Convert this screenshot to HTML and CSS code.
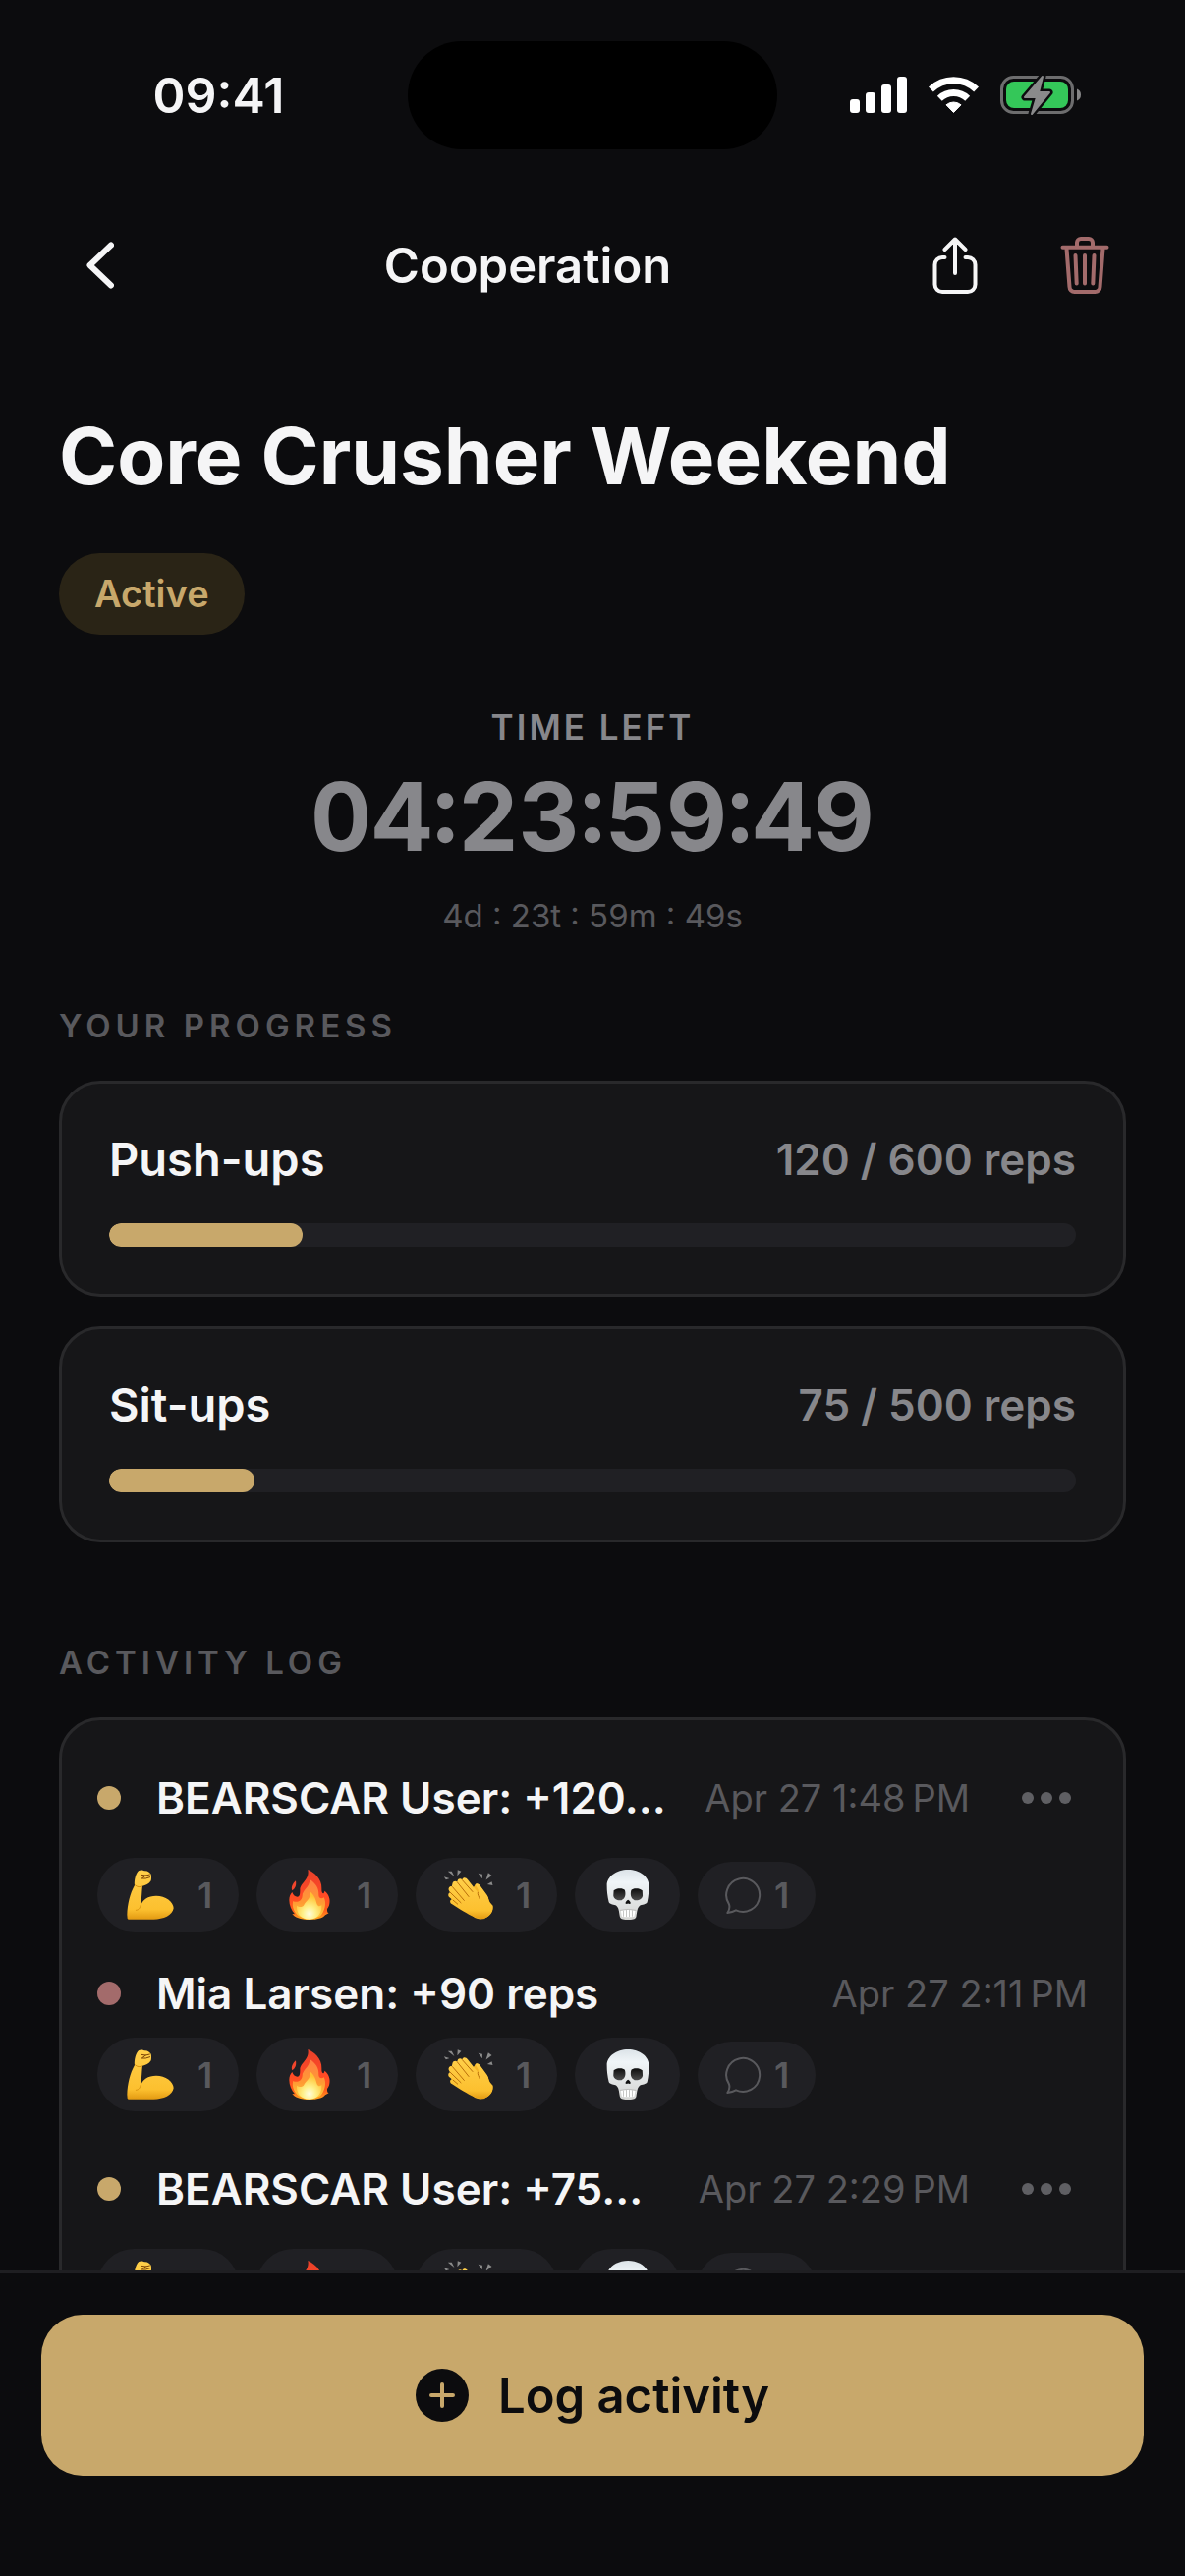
FILE: index.html
```html
<!DOCTYPE html>
<html lang="en">
<head>
<meta charset="utf-8">
<meta name="viewport" content="width=device-width, initial-scale=1">
<title>Cooperation</title>
<link rel="stylesheet" href="styles.css">
</head>
<body>
<svg class="sprite" aria-hidden="true">
  <defs>
    <linearGradient id="skin" x1="0" y1="0" x2="0" y2="1">
      <stop offset="0" stop-color="#ffcf4a"/><stop offset=".8" stop-color="#fcc02f"/><stop offset="1" stop-color="#e39a12"/>
    </linearGradient>
    <linearGradient id="flame" x1="0" y1="0" x2="0" y2="1">
      <stop offset="0" stop-color="#e8402a"/><stop offset=".5" stop-color="#ff4a26"/><stop offset=".8" stop-color="#ff5a1c"/><stop offset="1" stop-color="#ffa51e"/>
    </linearGradient>
    <linearGradient id="flame-mid" x1="0" y1="0" x2="0" y2="1">
      <stop offset="0" stop-color="#ff7f45"/><stop offset=".6" stop-color="#ff9a33"/><stop offset="1" stop-color="#ffd23a"/>
    </linearGradient>
    <radialGradient id="flame-core" cx=".5" cy=".8" r=".65">
      <stop offset="0" stop-color="#fffde0"/><stop offset=".4" stop-color="#fff08a"/><stop offset="1" stop-color="#ffc233"/>
    </radialGradient>
    <linearGradient id="bone" x1="0" y1="0" x2="0" y2="1">
      <stop offset="0" stop-color="#dce3e8"/><stop offset=".25" stop-color="#f0f5f8"/><stop offset="1" stop-color="#d4d4d2"/>
    </linearGradient>
    <linearGradient id="socket" x1="0" y1="0" x2="0" y2="1">
      <stop offset="0" stop-color="#0c0c0c"/><stop offset="1" stop-color="#4c4c4c"/>
    </linearGradient>
  </defs>
  <symbol id="arm" viewBox="150 98 144 153">
    <path fill="url(#skin)" d="M152 247L151 236C152 205 160 170 174 146C172 130 178 108 187 101C192 98 200 99 204 102C212 100 222 108 224 112C226 120 225 127 224 132C218 142 207 147 198 148C196 160 196 185 192 209C198 190 215 178 240 178C268 178 293 196 293 216C290 238 262 250 232 250L162 250C156 250 153 250 152 247Z"/>
    <path fill="none" stroke="#d8920f" stroke-width="3" stroke-linecap="round" d="M192 208C190 218 184 222 178 222M176 146C182 152 190 152 197 149"/>
    <path fill="none" stroke="#7a4306" stroke-width="3" stroke-linecap="round" d="M194 114L208 116L220 113M208 116L196 125H208L221 121"/>
  </symbol>
  <symbol id="fire" viewBox="640 98 130 153">
    <path fill="#f0452c" d="M663 132C665 144 663 155 652 162C648 154 652 142 663 132Z"/>
    <path fill="url(#flame)" d="M700 98C716 105 744 124 742 156C741 172 749 176 751 163C764 172 769 188 766 202C765 209 762 214 759 218Q758 230 764 231L753 237C744 247 730 251 705 251C676 251 660 244 652 233L660 234C650 222 643 208 643 191C643 181 647 172 652 167C655 176 661 181 668 181C676 180 676 170 676 160C676 138 706 130 700 98Z"/>
    <path fill="url(#flame-mid)" d="M706 128C724 140 734 154 733 176C733 184 740 190 749 183C758 200 752 225 738 240C720 250 688 250 672 240C658 228 650 210 655 194C664 200 682 196 683 178C683 160 706 152 706 128Z"/>
    <path fill="url(#flame-core)" d="M708 166C728 184 724 202 731 208C736 212 740 208 742 206C744 226 733 249 706 250C680 250 664 232 666 208C672 214 684 214 688 206C692 194 708 190 708 166Z"/>
  </symbol>
  <symbol id="clap" viewBox="152 98 152 154">
    <path fill="#8b8b8b" d="M152 120L169 125L158 129ZM164 103L176 103L184 119ZM194 99L205 103L193 117ZM257 109L270 112L270 126ZM288 108L299 116L281 130ZM299 135L302 146L285 143Z"/>
    <path fill="#f5b526" d="M246 148C250 138 260 142 264 150L288 184C292 204 301 204 302 212C304 232 290 244 270 250C250 252 236 240 234 230L212 190Z"/>
    <path fill="url(#skin)" d="M178 141C180 133 188 132 193 136C193 126 202 123 208 129C211 120 220 122 225 129L256 168C262 162 252 152 248 144C252 138 260 142 265 150L284 176C292 188 286 198 302 208C304 226 294 240 274 250C250 250 224 234 204 222L176 204C168 198 171 190 176 189L170 184C162 178 166 168 171 168L168 164C163 156 170 148 176 150Z"/>
    <path fill="none" stroke="#b96f0a" stroke-width="3" stroke-linecap="round" d="M208 130L240 166M193 137L228 181M178 151L214 193M171 168L204 200M256 168C254 176 260 180 262 188M180 192L194 204"/>
  </symbol>
  <symbol id="skull" viewBox="650 98 131 154">
    <path fill="url(#bone)" d="M716 98C752 98 780 120 780 146C780 166 779 178 775 198C772 206 758 206 752 209C744 216 744 226 741 243C738 252 728 252 716 252C704 252 694 252 691 243C688 226 688 216 680 209C674 206 660 206 657 198C653 178 651 166 651 146C651 120 680 98 716 98Z"/>
    <path fill="url(#socket)" d="M672 162C680 154 702 154 706 161C710 174 708 188 696 192C684 195 672 188 671 178ZM760 162C752 154 730 154 726 161C722 174 724 188 736 192C748 195 760 188 761 178Z"/>
    <path fill="#111" d="M716 191C721 194 724 199 724 202Q720 205 716 202Q712 205 708 202C708 199 711 194 716 191Z"/>
    <path fill="#fff" d="M694 224Q716 218 738 224L735 242Q716 246 697 242Z"/>
    <path fill="none" stroke="#a9a9a7" stroke-width="2" d="M691 223Q716 217 741 223M702 224V242M711 222V243M720 222V243M729 223V242"/>
  </symbol>
  <symbol id="bubble" viewBox="1010 120 114 114">
    <path fill="none" stroke="currentColor" stroke-width="6" stroke-linejoin="round" d="M1046 223A51 51 0 1 0 1025 205Q1029 218 1020 231Q1036 229 1046 223Z"/>
  </symbol>
  <symbol id="more" viewBox="0 0 50 12">
    <g fill="currentColor"><circle cx="6" cy="6" r="6"/><circle cx="25" cy="6" r="6"/><circle cx="44" cy="6" r="6"/></g>
  </symbol>
</svg>

<div class="app">
  <div class="status">
    <time class="status-time">09:41</time>
    <div class="island"></div>
    <div class="status-icons">
      <svg width="58" height="38" viewBox="0 0 58 38" fill="#fff" role="img" aria-label="Signal">
        <rect x="0" y="23" width="10" height="14" rx="3"/><rect x="16" y="16" width="10" height="21" rx="3"/><rect x="32" y="8" width="10" height="29" rx="3"/><rect x="48" y="0" width="10" height="37" rx="3"/>
      </svg>
      <svg width="51" height="38" viewBox="0 0 51 38" role="img" aria-label="Wi-Fi">
        <g fill="none" stroke="#fff" stroke-width="7"><path d="M2.4 13A33.5 33.5 0 0 1 48.6 13"/><path d="M11.3 22.3A20.5 20.5 0 0 1 39.7 22.3"/></g>
        <path fill="#fff" stroke="#fff" stroke-linejoin="round" d="M25.5 36.5L18 28.8A11.5 11.5 0 0 1 33 28.8Z"/>
      </svg>
      <svg width="82" height="42" viewBox="0 0 82 42" role="img" aria-label="Charging">
        <rect x="1.5" y="2.5" width="72" height="36" rx="12" fill="none" stroke="#6d6d6e" stroke-width="3"/>
        <rect x="6" y="7" width="63" height="27" rx="8" fill="#34c759"/>
        <path fill="#858586" d="M78 14.5Q82 16 82 20.500Q82 25 78 26.500Z"/>
        <path fill="#0c0c0e" stroke="#0c0c0e" stroke-width="7" stroke-linejoin="round" d="M43 2L25 23H37L32 40L50 18H39Z"/>
        <path fill="#8a8a8b" stroke="#8a8a8b" stroke-width="2" stroke-linejoin="round" d="M43 2L25 23H37L32 40L50 18H39Z"/>
      </svg>
    </div>
  </div>

  <header class="nav">
    <button class="icon-button" type="button" aria-label="Back">
      <svg width="28" height="48" viewBox="0 0 28 48" fill="none" stroke="#f5f5f6" stroke-width="6" stroke-linecap="round" stroke-linejoin="round"><path d="M25 3.500L3.500 24L25 44.500"/></svg>
    </button>
    <span class="nav-title">Cooperation</span>
    <div class="nav-actions">
      <button class="icon-button" type="button" aria-label="Share">
        <svg width="48" height="60" viewBox="0 0 48 60" fill="none" stroke="#f5f5f6" stroke-width="4" stroke-linecap="round" stroke-linejoin="round"><path d="M13.500 22H11A7.500 7.500 0 0 0 3.500 29.500V49.500A7.500 7.500 0 0 0 11 57H37A7.500 7.500 0 0 0 44.500 49.500V29.500A7.500 7.500 0 0 0 37 22H34.500M24 38V3.500M13.500 14L24 3.500L34.500 14"/></svg>
      </button>
      <button class="icon-button" type="button" aria-label="Delete">
        <svg width="50" height="60" viewBox="0 0 50 60" fill="none" stroke="#a36b6b" stroke-width="4" stroke-linecap="round" stroke-linejoin="round"><path d="M2.500 11.700H47.500M17 11V7A4 4 0 0 1 21 3H29A4 4 0 0 1 33 7V11M6.500 13L9.500 52A5 5 0 0 0 14.500 57H35.500A5 5 0 0 0 40.500 52L43.500 13M15.500 20L16.700 48.500M25 20V48.500M34.500 20L33.300 48.500"/></svg>
      </button>
    </div>
  </header>

  <main class="content">
    <h1>Core Crusher Weekend</h1>
    <span class="badge">Active</span>

    <section class="timer">
      <div class="timer-label">TIME LEFT</div>
      <div class="timer-value">04:23:59:49</div>
      <div class="timer-detail">4d : 23t : 59m : 49s</div>
    </section>

    <section class="section">
      <h2>YOUR PROGRESS</h2>
      <div class="goals">
        <div class="card goal">
          <div class="goal-head"><label for="push">Push-ups</label><span class="goal-value">120 / 600 reps</span></div>
          <progress id="push" value="120" max="600"></progress>
        </div>
        <div class="card goal">
          <div class="goal-head"><label for="sit">Sit-ups</label><span class="goal-value">75 / 500 reps</span></div>
          <progress id="sit" value="75" max="500"></progress>
        </div>
      </div>
    </section>

    <section class="section activity">
      <h2>ACTIVITY LOG</h2>
      <ul class="card log">
        <li class="entry">
          <div class="entry-head entry-own">
            <span class="dot"></span><span class="entry-text">BEARSCAR User: +120...</span>
            <time class="entry-time">Apr 27 1:48&#8239;PM</time>
            <button class="more" type="button" aria-label="More"><svg width="50" height="12"><use href="#more"/></svg></button>
          </div>
          <div class="reactions">
            <button class="pill" type="button" aria-label="Strong"><svg class="emoji"><use href="#arm"/></svg><span class="count">1</span></button>
            <button class="pill" type="button" aria-label="Fire"><svg class="emoji"><use href="#fire"/></svg><span class="count">1</span></button>
            <button class="pill" type="button" aria-label="Clap"><svg class="emoji"><use href="#clap"/></svg><span class="count">1</span></button>
            <button class="pill" type="button" aria-label="Skull"><svg class="emoji"><use href="#skull"/></svg></button>
            <button class="pill comment" type="button" aria-label="Comments"><svg class="bubble"><use href="#bubble"/></svg><span class="count">1</span></button>
          </div>
        </li>
        <li class="entry">
          <div class="entry-head">
            <span class="dot dot-other"></span><span class="entry-text">Mia Larsen: +90 reps</span>
            <time class="entry-time">Apr 27 2:11&#8239;PM</time>
          </div>
          <div class="reactions">
            <button class="pill" type="button" aria-label="Strong"><svg class="emoji"><use href="#arm"/></svg><span class="count">1</span></button>
            <button class="pill" type="button" aria-label="Fire"><svg class="emoji"><use href="#fire"/></svg><span class="count">1</span></button>
            <button class="pill" type="button" aria-label="Clap"><svg class="emoji"><use href="#clap"/></svg><span class="count">1</span></button>
            <button class="pill" type="button" aria-label="Skull"><svg class="emoji"><use href="#skull"/></svg></button>
            <button class="pill comment" type="button" aria-label="Comments"><svg class="bubble"><use href="#bubble"/></svg><span class="count">1</span></button>
          </div>
        </li>
        <li class="entry">
          <div class="entry-head entry-own">
            <span class="dot"></span><span class="entry-text">BEARSCAR User: +75...</span>
            <time class="entry-time">Apr 27 2:29&#8239;PM</time>
            <button class="more" type="button" aria-label="More"><svg width="50" height="12"><use href="#more"/></svg></button>
          </div>
          <div class="reactions">
            <button class="pill" type="button" aria-label="Strong"><svg class="emoji"><use href="#arm"/></svg><span class="count">1</span></button>
            <button class="pill" type="button" aria-label="Fire"><svg class="emoji"><use href="#fire"/></svg><span class="count">1</span></button>
            <button class="pill" type="button" aria-label="Clap"><svg class="emoji"><use href="#clap"/></svg><span class="count">1</span></button>
            <button class="pill" type="button" aria-label="Skull"><svg class="emoji"><use href="#skull"/></svg></button>
            <button class="pill comment" type="button" aria-label="Comments"><svg class="bubble"><use href="#bubble"/></svg><span class="count">1</span></button>
          </div>
        </li>
      </ul>
    </section>
  </main>

  <footer class="bottom">
    <button class="primary" type="button">
      <svg width="54" height="54" viewBox="0 0 54 54"><circle cx="27" cy="27" r="27" fill="#0c0c0e"/><path d="M27 16V38M16 27H38" stroke="#c8a86b" stroke-width="4" stroke-linecap="round"/></svg>
      Log activity
    </button>
  </footer>
</div>
</body>
</html>
```
FILE: styles.css
```css
* {
  box-sizing: border-box;
}

:root {
  --bg: #0c0c0e;
  --card: #161618;
  --line: #29292b;
  --fill: #202024;
  --text: #f5f5f6;
  --text-2: #87878b;
  --text-3: #59595d;
  --gold: #c8a86b;
}

body {
  margin: 0;
  background: var(--bg);
  color: var(--text);
  font-family: Inter, "Liberation Sans", sans-serif;
}

button {
  margin: 0;
  padding: 0;
  border: 0;
  background: none;
  color: inherit;
  font: inherit;
}

svg {
  display: block;
}

.sprite {
  position: absolute;
  width: 0;
  height: 0;
}

.app {
  display: flex;
  flex-direction: column;
  height: 100vh;
}

/* Status bar */
.status {
  display: grid;
  grid-template-columns: 1fr 376px 1fr;
  align-items: center;
  padding: 42px 0 34px;
}

.status-time {
  padding-left: 30px;
  font-size: 50px;
  font-weight: 600;
  text-align: center;
}

.island {
  height: 110px;
  border-radius: 55px;
  background: #000;
}

.status-icons {
  display: flex;
  justify-content: center;
  align-items: center;
  gap: 22px;
  padding-right: 32px;
}

/* Navigation */
.nav {
  display: flex;
  align-items: center;
  height: 168px;
  flex: none;
  padding: 0 60px;
}

.icon-button {
  display: flex;
  justify-content: center;
  align-items: center;
  width: 84px;
  height: 84px;
}

.nav-title {
  flex: 1;
  font-size: 49px;
  font-weight: 600;
  text-align: center;
}

.nav-actions {
  display: flex;
  gap: 48px;
}

/* Scrolling content */
.content {
  flex: 1;
  min-height: 0;
  padding: 60px 60px 0;
  overflow-y: auto;
  scrollbar-width: none;
}

h1 {
  margin: 0 0 49px;
  font-size: 80px;
  font-weight: 700;
  line-height: 100px;
}

.badge {
  display: block;
  width: fit-content;
  padding: 0 36px;
  border-radius: 42px;
  background: #2a2416;
  color: var(--gold);
  font-size: 38px;
  font-weight: 600;
  line-height: 83px;
}

.timer {
  margin-top: 72px;
  text-align: center;
}

.timer-label {
  color: var(--text-2);
  font-size: 35px;
  font-weight: 600;
  line-height: 44px;
  letter-spacing: 3px;
}

.timer-value {
  margin: 11px 0 23px;
  color: var(--text-2);
  font-size: 96px;
  font-weight: 700;
  line-height: 116px;
  font-variant-numeric: tabular-nums;
}

.timer-detail {
  color: var(--text-3);
  font-size: 33px;
  line-height: 40px;
}

.section {
  margin-top: 72px;
}

.activity {
  margin-top: 102px;
}

h2 {
  margin: 0 0 36px;
  color: var(--text-3);
  font-size: 33px;
  font-weight: 600;
  line-height: 40px;
  letter-spacing: 5px;
}

.card {
  border: 3px solid var(--line);
  border-radius: 42px;
  background: var(--card);
}

.goals {
  display: grid;
  gap: 30px;
}

.goal {
  display: grid;
  gap: 36px;
  padding: 48px;
}

.goal-head {
  display: flex;
  justify-content: space-between;
  align-items: center;
  font-size: 47px;
  font-weight: 600;
  line-height: 58px;
}

.goal-value {
  color: var(--text-2);
  font-size: 44px;
}

progress {
  display: block;
  appearance: none;
  width: 100%;
  height: 24px;
  border: 0;
  border-radius: 12px;
  background: var(--fill);
  overflow: hidden;
}

progress::-webkit-progress-bar {
  background: var(--fill);
}

progress::-webkit-progress-value {
  border-radius: 12px;
  background: var(--gold);
}

/* Activity log */
.log {
  display: grid;
  gap: 36px;
  margin: 0;
  padding: 36px;
  list-style: none;
}

.entry {
  display: grid;
  gap: 18px;
}

.entry-head {
  display: flex;
  align-items: center;
  min-height: 54px;
}

.entry-own {
  min-height: 86px;
}

.dot {
  flex: none;
  width: 24px;
  height: 24px;
  margin-right: 36px;
  border-radius: 50%;
  background: var(--gold);
}

.dot-other {
  background: #a36b6b;
}

.entry-text {
  flex: 1;
  font-size: 44px;
  font-weight: 600;
  line-height: 54px;
  white-space: nowrap;
}

.entry-time {
  color: var(--text-3);
  font-size: 38px;
  white-space: nowrap;
}

.more {
  display: flex;
  justify-content: center;
  align-items: center;
  width: 84px;
  height: 84px;
  margin-left: 36px;
  color: #5f5f63;
}

.reactions {
  display: flex;
  align-items: center;
  gap: 18px;
}

.pill {
  display: flex;
  align-items: center;
  gap: 20px;
  height: 75px;
  padding: 0 26px 0 27px;
  border-radius: 38px;
  background: var(--fill);
  color: var(--text-3);
}

.emoji {
  width: 54px;
  height: 51px;
}

.count {
  width: 17px;
  font-size: 36px;
  font-weight: 600;
  text-align: center;
}

.comment {
  gap: 12px;
  height: 68px;
}

.bubble {
  width: 38px;
  height: 38px;
}

/* Bottom action */
.bottom {
  flex: none;
  padding: 42px 42px 102px;
  border-top: 3px solid #1f1f22;
}

.primary {
  display: flex;
  justify-content: center;
  align-items: center;
  gap: 30px;
  width: 100%;
  height: 164px;
  border-radius: 42px;
  background: var(--gold);
  color: var(--bg);
  font-size: 49px;
  font-weight: 600;
}
```
